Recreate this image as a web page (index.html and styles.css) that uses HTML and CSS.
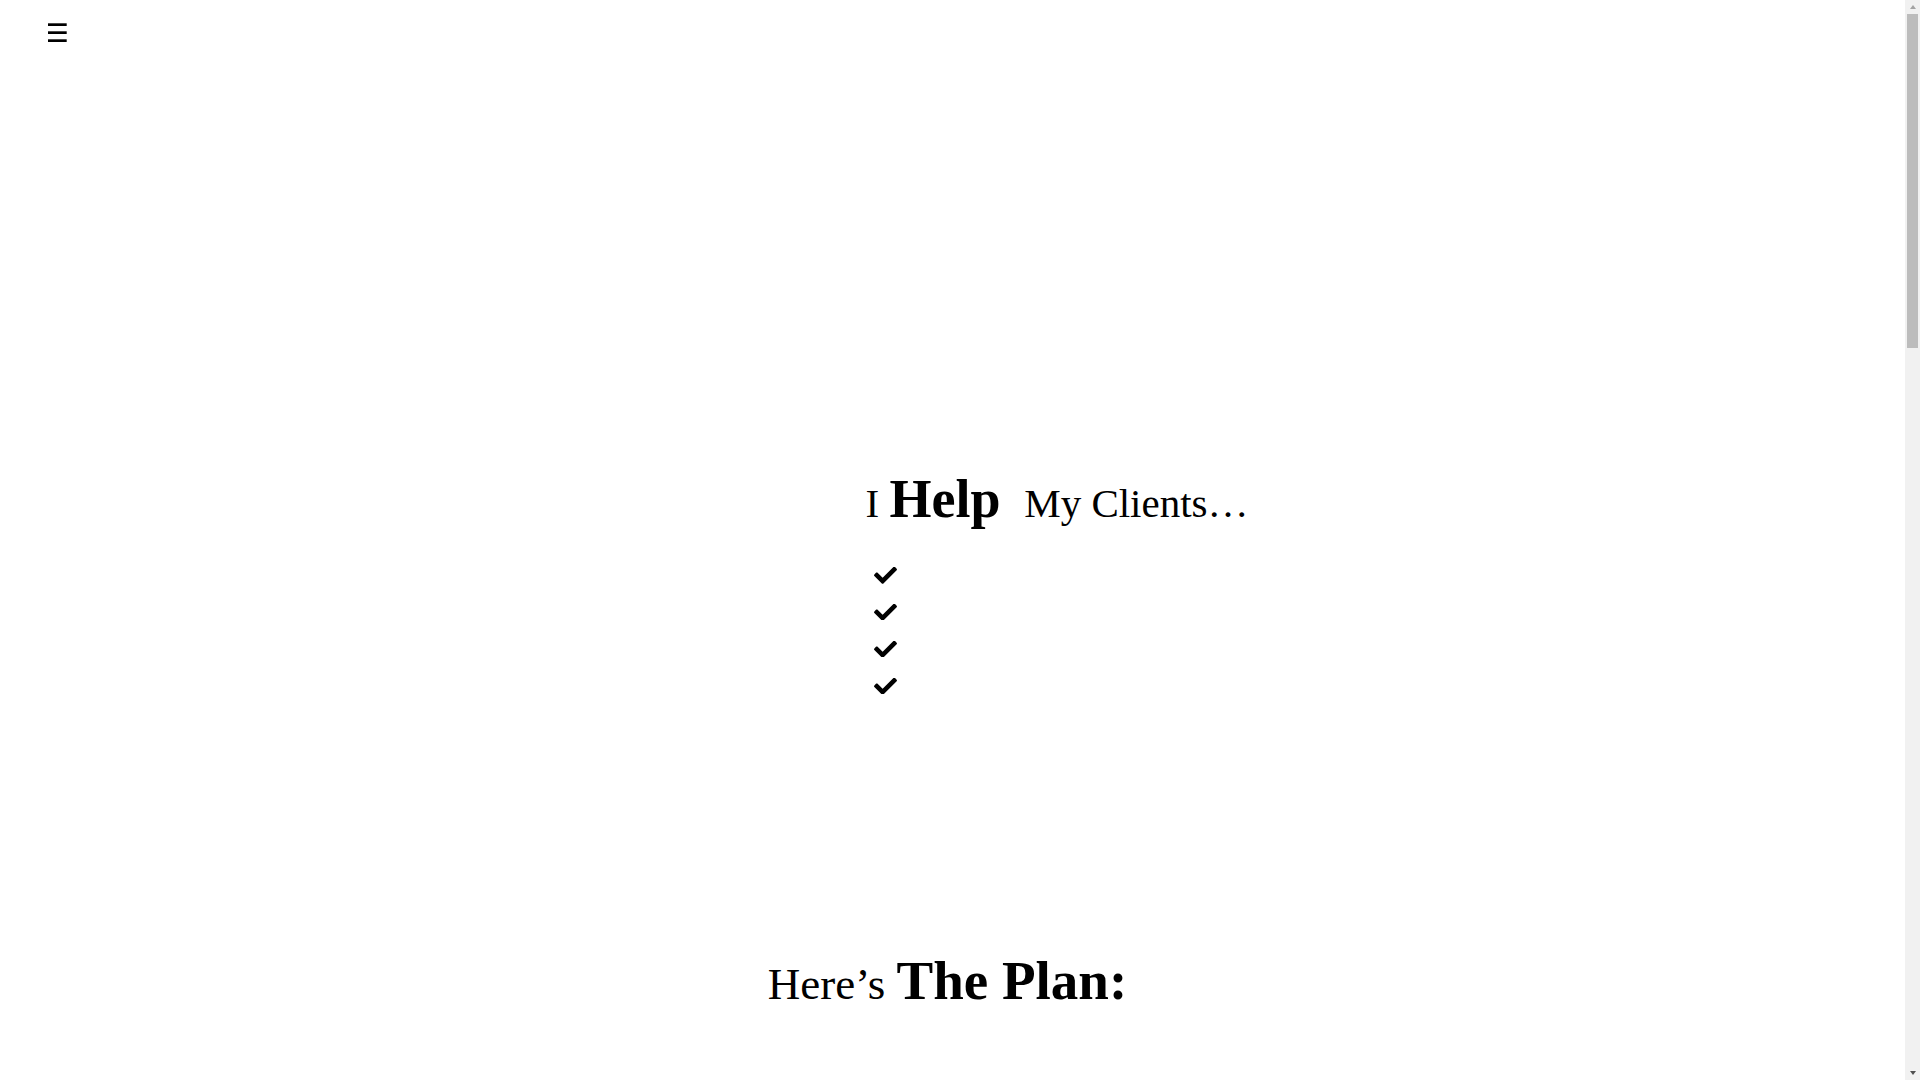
FILE: index.html
```html
<!DOCTYPE html>
<html lang="en">
<head>
<meta charset="utf-8">
<title>I Help My Clients</title>
<link rel="stylesheet" href="styles.css">
</head>
<body>
<div class="page">
  <header class="topbar">
    <button class="menu-toggle" type="button" aria-label="Menu">
      <svg class="menu-icon" width="19" height="19" viewBox="0 0 19 19" aria-hidden="true">
        <rect x="0" y="0.3" width="18.7" height="2.7"/>
        <rect x="0" y="8.3" width="18.7" height="2.7"/>
        <rect x="0" y="16.3" width="18.7" height="2.7"/>
      </svg>
    </button>
  </header>

  <main>
    <section class="intro">
      <div class="intro-inner">
        <div class="intro-media"></div>
        <div class="intro-copy">
          <h2 class="help-title">I <strong class="accent">Help&nbsp;</strong> My Clients…</h2>
          <ul class="checklist">
            <li class="check-item"><svg class="check" viewBox="0 72 512 368" aria-hidden="true"><path d="M173.898 439.404l-166.4-166.4c-9.997-9.997-9.997-26.206 0-36.204l36.203-36.204c9.997-9.998 26.207-9.998 36.204 0L192 312.69 432.095 72.596c9.997-9.997 26.207-9.997 36.204 0l36.203 36.204c9.997 9.997 9.997 26.206 0 36.204l-294.4 294.401c-9.998 9.997-26.207 9.997-36.204-.001z"/></svg></li>
            <li class="check-item"><svg class="check" viewBox="0 72 512 368" aria-hidden="true"><path d="M173.898 439.404l-166.4-166.4c-9.997-9.997-9.997-26.206 0-36.204l36.203-36.204c9.997-9.998 26.207-9.998 36.204 0L192 312.69 432.095 72.596c9.997-9.997 26.207-9.997 36.204 0l36.203 36.204c9.997 9.997 9.997 26.206 0 36.204l-294.4 294.401c-9.998 9.997-26.207 9.997-36.204-.001z"/></svg></li>
            <li class="check-item"><svg class="check" viewBox="0 72 512 368" aria-hidden="true"><path d="M173.898 439.404l-166.4-166.4c-9.997-9.997-9.997-26.206 0-36.204l36.203-36.204c9.997-9.998 26.207-9.998 36.204 0L192 312.69 432.095 72.596c9.997-9.997 26.207-9.997 36.204 0l36.203 36.204c9.997 9.997 9.997 26.206 0 36.204l-294.4 294.401c-9.998 9.997-26.207 9.997-36.204-.001z"/></svg></li>
            <li class="check-item"><svg class="check" viewBox="0 72 512 368" aria-hidden="true"><path d="M173.898 439.404l-166.4-166.4c-9.997-9.997-9.997-26.206 0-36.204l36.203-36.204c9.997-9.998 26.207-9.998 36.204 0L192 312.69 432.095 72.596c9.997-9.997 26.207-9.997 36.204 0l36.203 36.204c9.997 9.997 9.997 26.206 0 36.204l-294.4 294.401c-9.998 9.997-26.207 9.997-36.204-.001z"/></svg></li>
          </ul>
        </div>
      </div>
    </section>

    <section class="plan">
      <h2 class="plan-title">Here’s <strong class="accent">The Plan:</strong></h2>
    </section>
  </main>
</div>

<div class="fake-scrollbar" aria-hidden="true">
  <span class="sb-arrow sb-up"></span>
  <span class="sb-thumb"></span>
  <span class="sb-track"></span>
  <span class="sb-arrow sb-down"></span>
</div>
</body>
</html>
```

FILE: styles.css
```css
html, body {
  margin: 0;
  padding: 0;
  background: #ffffff;
}

body {
  font-family: "Liberation Serif", "Times New Roman", serif;
  color: #000000;
  padding-right: 15px;
}

.page {
  min-height: 3400px;
}

.topbar {
  padding: 23px 0 0 48px;
}

.menu-toggle {
  display: block;
  padding: 0;
  margin: 0;
  border: 0;
  background: transparent;
  cursor: pointer;
}

.menu-icon {
  display: block;
  fill: #000000;
}

.intro {
  padding-top: 430px;
}

.intro-inner {
  max-width: 1140px;
  margin: 0 auto;
  display: grid;
  grid-template-columns: 483px 1fr;
}

.help-title {
  margin: 0;
  font-size: 41px;
  font-weight: 400;
  line-height: 60px;
  white-space: nowrap;
}

.accent {
  font-weight: 700;
  font-size: 54px;
  line-height: 54px;
}

.checklist {
  list-style: none;
  margin: 24px 0 0;
  padding: 0 0 0 8px;
}

.check-item {
  height: 36.8px;
  display: flex;
  align-items: center;
}

.check {
  width: 23px;
  height: 16.5px;
  display: block;
  fill: #000000;
}

.plan {
  margin-top: 249px;
  padding-right: 10px;
  text-align: center;
}

.plan-title {
  margin: 0;
  font-size: 45px;
  font-weight: 400;
  line-height: 60px;
}

.plan-title .accent {
  font-size: 55px;
  line-height: 55px;
}

/* visual stand-in for the browser's scrollbar, overlaid at the right edge */
.fake-scrollbar {
  position: fixed;
  top: 0;
  right: 0;
  width: 15px;
  height: 100vh;
  background: #f1f1f1;
  display: flex;
  flex-direction: column;
  align-items: center;
  padding: 5px 0;
  box-sizing: border-box;
}

.sb-arrow {
  width: 0;
  height: 0;
  border-left: 3.5px solid transparent;
  border-right: 3.5px solid transparent;
}

.sb-up {
  border-bottom: 4px solid #a3a3a3;
}

.sb-down {
  border-top: 4px solid #505050;
}

.sb-thumb {
  margin-top: 5px;
  width: 11px;
  height: 334px;
  background: #bcbcbc;
}

.sb-track {
  flex: 1;
}
```
